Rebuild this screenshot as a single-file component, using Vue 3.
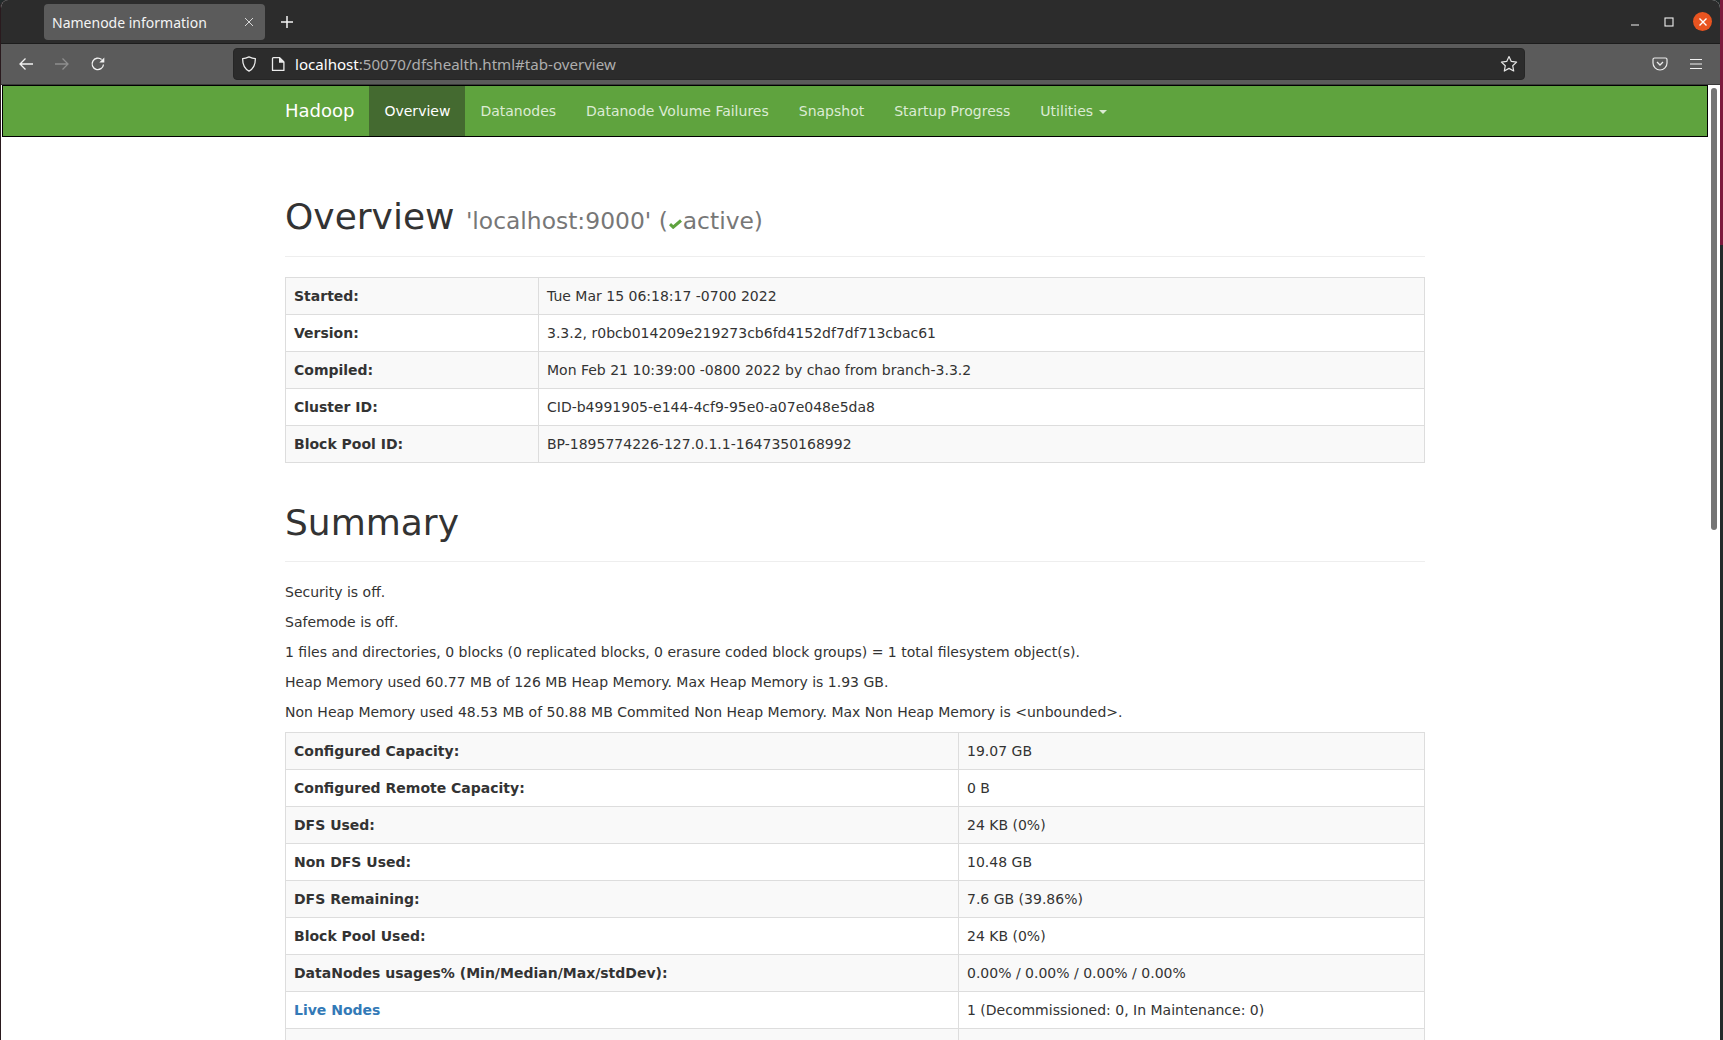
<script setup>
const info = [
  ['Started:', 'Tue Mar 15 06:18:17 -0700 2022'],
  ['Version:', '3.3.2, r0bcb014209e219273cb6fd4152df7df713cbac61'],
  ['Compiled:', 'Mon Feb 21 10:39:00 -0800 2022 by chao from branch-3.3.2'],
  ['Cluster ID:', 'CID-b4991905-e144-4cf9-95e0-a07e048e5da8'],
  ['Block Pool ID:', 'BP-1895774226-127.0.1.1-1647350168992'],
]
const summary = [
  'Security is off.',
  'Safemode is off.',
  '1 files and directories, 0 blocks (0 replicated blocks, 0 erasure coded block groups) = 1 total filesystem object(s).',
  'Heap Memory used 60.77 MB of 126 MB Heap Memory. Max Heap Memory is 1.93 GB.',
  'Non Heap Memory used 48.53 MB of 50.88 MB Commited Non Heap Memory. Max Non Heap Memory is <unbounded>.',
]
const stats = [
  ['Configured Capacity:', '19.07 GB'],
  ['Configured Remote Capacity:', '0 B'],
  ['DFS Used:', '24 KB (0%)'],
  ['Non DFS Used:', '10.48 GB'],
  ['DFS Remaining:', '7.6 GB (39.86%)'],
  ['Block Pool Used:', '24 KB (0%)'],
  ['DataNodes usages% (Min/Median/Max/stdDev):', '0.00% / 0.00% / 0.00% / 0.00%'],
  ['Live Nodes', '1 (Decommissioned: 0, In Maintenance: 0)', true],
  ['', ''],
]
const links = ['Datanodes', 'Datanode Volume Failures', 'Snapshot', 'Startup Progress']
</script>

<template>
  <div class="desktop">
    <div class="window">
      <header class="titlebar">
        <div class="tab">
          <span class="tab-title">Namenode information</span>
          <svg class="tab-x" width="10" height="10" viewBox="0 0 10 10"><path d="M1 1l8 8M9 1l-8 8" stroke="#d8d8d8" stroke-width="1" fill="none"/></svg>
        </div>
        <svg class="newtab" width="14" height="14" viewBox="0 0 14 14"><path d="M7 1v12M1 7h12" stroke="#f4f4f4" stroke-width="1.5" fill="none"/></svg>
        <div class="spacer"></div>
        <svg class="wc wc-min" width="10" height="10" viewBox="0 0 10 10"><path d="M1 8h8" stroke="#f0f0f0" stroke-width="1.2"/></svg>
        <svg class="wc wc-max" width="10" height="10" viewBox="0 0 10 10"><rect x="1" y="1" width="8" height="8" fill="none" stroke="#f0f0f0" stroke-width="1.1"/></svg>
        <div class="wc-close">
          <svg width="10" height="10" viewBox="0 0 10 10"><path d="M1.5 1.5l7 7M8.5 1.5l-7 7" stroke="#fff" stroke-width="1.4"/></svg>
        </div>
      </header>
      <div class="toolbar">
        <svg class="tb-btn" width="16" height="16" viewBox="0 0 16 16"><path d="M15 8H2M7.5 2.5L2 8l5.5 5.5" stroke="#f2f2f2" stroke-width="1.3" fill="none"/></svg>
        <svg class="tb-btn" width="16" height="16" viewBox="0 0 16 16"><path d="M1 8h13M8.5 2.5L14 8l-5.5 5.5" stroke="#8e8e8e" stroke-width="1.3" fill="none"/></svg>
        <svg class="tb-btn" width="16" height="16" viewBox="0 0 16 16"><path d="M13.5 8.5A5.7 5.7 0 1 1 11.6 3.6" stroke="#f2f2f2" stroke-width="1.3" fill="none"/><path d="M14.3 1.4v5h-5z" fill="#f2f2f2"/></svg>
        <div class="urlbar">
          <svg class="u-ico shield" width="16" height="16" viewBox="0 0 16 16"><path d="M8 .9c2.200 1.100 4.300 1.700 6.400 1.700 0 6-1.700 10.200-6.400 12.500C3.300 12.800 1.600 8.600 1.600 2.600 3.700 2.600 5.800 2 8 .9z" stroke="#ececec" stroke-width="1.300" fill="none" stroke-linejoin="round"/></svg>
          <svg class="u-ico" width="14" height="16" viewBox="0 0 14 16"><path d="M2.500 1.600h6L12.900 6v8.400H1.500V2.600c0-.6.400-1 1-1z" stroke="#ececec" stroke-width="1.300" fill="none" stroke-linejoin="round"/><path d="M8 1.600h1L13 5.600v1.100H8z" fill="#ececec"/></svg>
          <span class="url"><span class="url-host">localhost</span>:50070/dfshealth.html#tab-overview</span>
          <div class="spacer"></div>
          <svg class="star" width="18" height="18" viewBox="0 0 18 18"><path d="M9 1.500l2.300 4.900 5.300.7-3.900 3.600 1 5.300L9 13.400 4.300 16l1-5.300L1.400 7.100l5.300-.7z" stroke="#e6e6e6" stroke-width="1.200" fill="none" stroke-linejoin="round"/></svg>
        </div>
        <svg class="pocket" width="16" height="16" viewBox="0 0 16 16"><path d="M2.500 2h11c.8 0 1.500.7 1.500 1.500V7a7 7 0 0 1-14 0V3.500C1 2.700 1.700 2 2.500 2z" stroke="#ececec" stroke-width="1.200" fill="none"/><path d="M5 6l3 3 3-3" stroke="#ececec" stroke-width="1.300" fill="none"/></svg>
        <svg class="menu" width="14" height="12" viewBox="0 0 14 12"><path d="M1 1.500h12M1 6h12M1 10.500h12" stroke="#f2f2f2" stroke-width="1.200"/></svg>
      </div>
      <div class="viewport">
        <div class="page">
          <nav class="navbar">
            <div class="nav-inner">
              <a class="brand">Hadoop</a>
              <a class="nav-link active">Overview</a>
              <a v-for="l in links" :key="l" class="nav-link">{{ l }}</a>
              <a class="nav-link">Utilities <b class="caret"></b></a>
            </div>
          </nav>
          <main class="container">
            <div class="page-header first">
              <h1>Overview <small>'localhost:9000' (<svg class="check" width="13" height="10" viewBox="0 0 13 10"><path d="M1 5.200l3.200 3L12 1.500" stroke="#5fa33e" stroke-width="3" fill="none"/></svg>active)</small></h1>
            </div>
            <table class="table info">
              <tbody>
                <tr v-for="r in info" :key="r[0]">
                  <th class="col-a">{{ r[0] }}</th>
                  <td>{{ r[1] }}</td>
                </tr>
              </tbody>
            </table>
            <div class="page-header">
              <h1>Summary</h1>
            </div>
            <p v-for="s in summary" :key="s" class="line">{{ s }}</p>
            <table class="table stats">
              <tbody>
                <tr v-for="(r, i) in stats" :key="i">
                  <th class="col-b"><a v-if="r[2]" class="link">{{ r[0] }}</a><template v-else>{{ r[0] }}</template></th>
                  <td>{{ r[1] }}</td>
                </tr>
              </tbody>
            </table>
          </main>
        </div>
        <div class="scrollbar"><div class="thumb"></div></div>
      </div>
    </div>
    <div class="strip"></div>
  </div>
</template>

<style>
html, body { margin: 0; overflow: hidden; background: #232a2a; }
</style>

<style scoped>
.desktop {
  width: 1723px;
  height: 1040px;
  display: flex;
  overflow: hidden;
  background: #232a2a;
}
.window {
  width: 1720px;
  height: 1040px;
  display: flex;
  flex-direction: column;
  background: #fff;
  box-sizing: border-box;
  border-left: 1px solid #2a1a1e;
  border-radius: 8px 8px 0 0;
  overflow: hidden;
}
.strip {
  flex: 1;
  background: linear-gradient(#7c1a3c 0, #7c1a3c 245px, #232a2a 245px);
}
.titlebar {
  height: 43px;
  background: #2c2c2c;
  border-bottom: 1px solid #1d1d1d;
  display: flex;
  align-items: center;
  padding: 0 8px 0 43px;
  flex: none;
}
.tab {
  width: 221px;
  height: 36px;
  margin-top: 1px;
  background: #5b5b5b;
  border-radius: 4px;
  display: flex;
  align-items: center;
  justify-content: space-between;
  padding: 0 11px 0 8px;
  box-sizing: border-box;
}
.tab-title {
  font: 14px "Noto Sans", sans-serif;
  color: #f4f4f4;
  white-space: nowrap;
}
.newtab { margin-left: 15px; }
.spacer { flex: 1; }
.wc-min { margin-right: 24px; }
.wc-max { margin-right: 19px; }
.wc-close {
  width: 19px;
  height: 19px;
  border-radius: 50%;
  background: #e95420;
  display: flex;
  align-items: center;
  justify-content: center;
}
.toolbar {
  height: 40px;
  background: #5b5b5b;
  display: flex;
  align-items: center;
  padding-left: 17px;
  flex: none;
  border-bottom: 1px solid #3a3a3a;
}
.tb-btn { margin-right: 20px; }
.urlbar {
  width: 1292px;
  height: 32px;
  margin-left: 107px;
  background: #2c2c2c;
  border: 1px solid #262626;
  border-radius: 4px;
  display: flex;
  align-items: center;
  box-sizing: border-box;
  padding: 0 6px 0 7px;
}
.u-ico { margin-right: 9px; }
.shield { margin-right: 14px; }
.url {
  font: 15.100px "Noto Sans", sans-serif;
  color: #aeaeae;
  margin-left: 1px;
  white-space: nowrap;
}
.url-host { color: #fff; }
.pocket { margin-left: 127px; }
.menu { margin-left: 21px; }
.viewport {
  flex: 1;
  display: flex;
  min-height: 0;
  background: #fff;
}
.page {
  width: 1708px;
  flex: none;
  padding-left: 1px;
  box-sizing: border-box;
  overflow: hidden;
  font: 14px/20px "DejaVu Sans", sans-serif;
  color: #333;
}
.scrollbar {
  flex: 1;
  background: #fff;
  padding: 3px 3px 0 2px;
}
.thumb {
  height: 442px;
  background: #757575;
  border-radius: 3px;
  width: 6px;
}
.navbar {
  height: 52px;
  background: #5fa33e;
  border: 1px solid #000;
  box-sizing: border-box;
  width: 1706px;
}
.nav-inner {
  width: 1140px;
  margin-left: 282px;
  display: flex;
  height: 50px;
}
.brand {
  font-size: 18px;
  line-height: 50px;
  color: #fff;
  margin-right: 15px;
}
.nav-link {
  padding: 0 15px;
  line-height: 50px;
  color: #dcebd4;
  white-space: nowrap;
}
.nav-link.active {
  background: #446a30;
  color: #fff;
}
.caret {
  display: inline-block;
  width: 0;
  height: 0;
  margin-left: 1px;
  vertical-align: middle;
  border-top: 4px solid #dcebd4;
  border-left: 4px solid transparent;
  border-right: 4px solid transparent;
}
.container {
  width: 1140px;
  margin-left: 283px;
}
.page-header {
  border-bottom: 1px solid #eee;
  padding-bottom: 9px;
  margin: 40px 0 20px;
}
.page-header.first { margin-top: 60px; }
h1 {
  font-size: 36px;
  line-height: 1.1;
  font-weight: 500;
  margin: 20px 0 10px;
  color: #333;
}
small {
  font-size: 23.400px;
  line-height: 1;
  font-weight: 400;
  color: #777;
}
.check {
  margin: 0 1px;
  vertical-align: 0;
}
.line {
  margin: 0 0 10px;
}
.table {
  width: 100%;
  border-collapse: collapse;
  border: 1px solid #ddd;
  margin-bottom: 20px;
}
th, td {
  border: 1px solid #ddd;
  padding: 8px;
  height: 20px;
  text-align: left;
  vertical-align: top;
  line-height: 20px;
}
th { font-weight: 700; }
tr:nth-child(odd) th, tr:nth-child(odd) td { background: #f9f9f9; }
.col-a { width: 236px; }
.col-b { width: 656px; }
.link { color: #337ab7; }
</style>
